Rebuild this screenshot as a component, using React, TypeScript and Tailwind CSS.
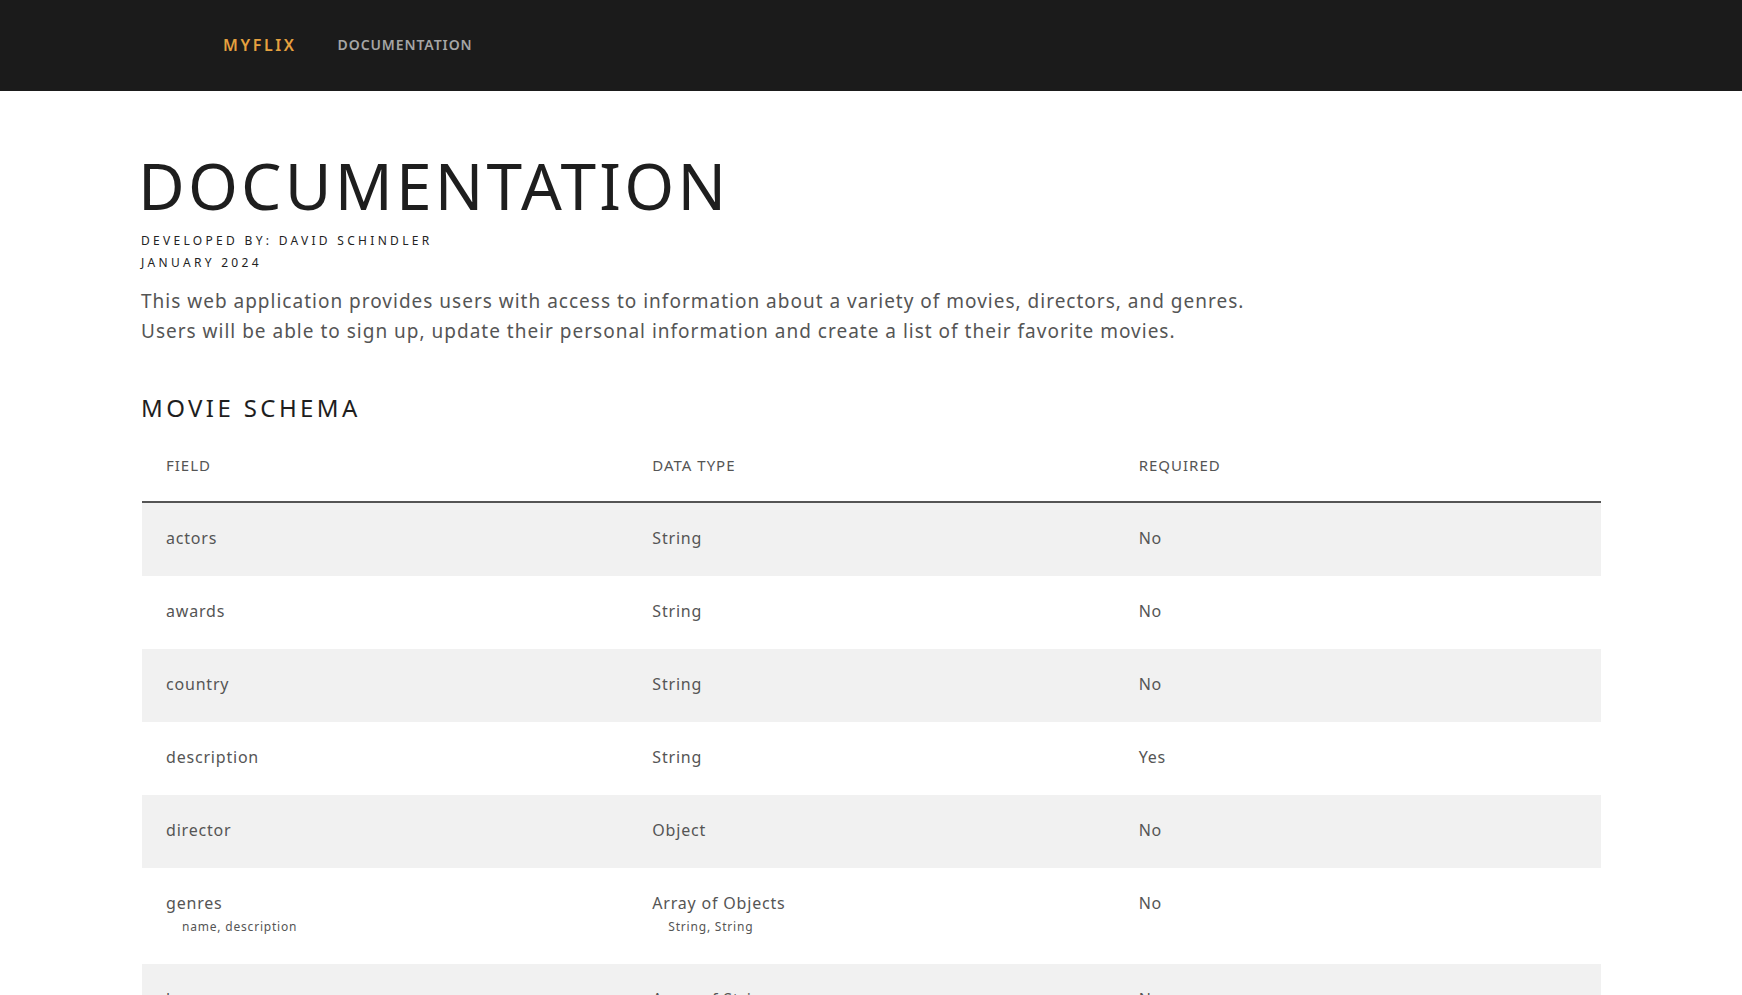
const rows = [
  { field: 'actors', type: 'String', required: 'No' },
  { field: 'awards', type: 'String', required: 'No' },
  { field: 'country', type: 'String', required: 'No' },
  { field: 'description', type: 'String', required: 'Yes' },
  { field: 'director', type: 'Object', required: 'No' },
  { field: 'genres', type: 'Array of Objects', required: 'No', subField: 'name, description', subType: 'String, String' },
  { field: 'languages', type: 'Array of Strings', required: 'No' },
  { field: 'title', type: 'String', required: 'Yes' },
]

export default function App() {
  return (
    <div className="min-h-screen bg-white font-['Noto_Sans',sans-serif] text-[#555]">
      <nav className="h-[91px] bg-[#1b1b1b] flex items-center pl-[223px] gap-[41px] pb-[2px]">
        <span className="text-[#e5a13f] text-[16px] font-semibold tracking-[2.6px]">MYFLIX</span>
        <span className="text-[#a5a5a5] text-[14px] font-semibold tracking-[0.9px]">DOCUMENTATION</span>
      </nav>

      <main className="px-[141px] pt-[55px]">
        <h1 className="text-[#1e1e1e] text-[64px] font-normal leading-[80px] tracking-[3.2px] -ml-[3px]">DOCUMENTATION</h1>
        <p className="mt-[4px] text-[#222] text-[12px] tracking-[3.3px] leading-[22px]">DEVELOPED BY: DAVID SCHINDLER</p>
        <p className="text-[#222] text-[12px] tracking-[3.3px] leading-[22px]">JANUARY 2024</p>
        <p className="mt-[12px] text-[19px] leading-[30px] tracking-[1px] text-[#555]">
          This web application provides users with access to information about a variety of movies, directors, and genres.
          <br />
          Users will be able to sign up, update their personal information and create a list of their favorite movies.
        </p>

        <h2 className="mt-[46px] text-[#1e1e1e] text-[24px] tracking-[3.4px] leading-[32px]">MOVIE SCHEMA</h2>

        <table className="mt-[4px] ml-[1px] w-[calc(100%-1px)] table-fixed border-collapse">
          <thead>
            <tr className="border-b-2 border-[#555]">
              <th className="text-left font-normal text-[15px] tracking-[1px] px-6 pt-[26px] pb-[24px] text-[#555]">FIELD</th>
              <th className="text-left font-normal text-[15px] tracking-[1px] px-6 pt-[26px] pb-[24px] text-[#555]">DATA TYPE</th>
              <th className="text-left font-normal text-[15px] tracking-[1px] px-6 pt-[26px] pb-[24px] text-[#555]">REQUIRED</th>
            </tr>
          </thead>
          <tbody>
            {rows.map((r, i) => (
              <tr key={r.field} className={i % 2 === 0 ? 'bg-[#f1f1f1]' : 'bg-white'}>
                <td className="px-6 pt-[24px] pb-[26px] align-top text-[16px] tracking-[0.8px] leading-[23px]">
                  {r.field}
                  {r.subField && <div className="pl-4 pt-[3px] pb-[2px] text-[12px] tracking-[0.8px] leading-[18px]">{r.subField}</div>}
                </td>
                <td className="px-6 pt-[24px] pb-[26px] align-top text-[16px] tracking-[0.8px] leading-[23px]">
                  {r.type}
                  {r.subType && <div className="pl-4 pt-[3px] pb-[2px] text-[12px] tracking-[0.8px] leading-[18px]">{r.subType}</div>}
                </td>
                <td className="px-6 pt-[24px] pb-[26px] align-top text-[16px] tracking-[0.8px] leading-[23px]">{r.required}</td>
              </tr>
            ))}
          </tbody>
        </table>
      </main>
    </div>
  )
}
